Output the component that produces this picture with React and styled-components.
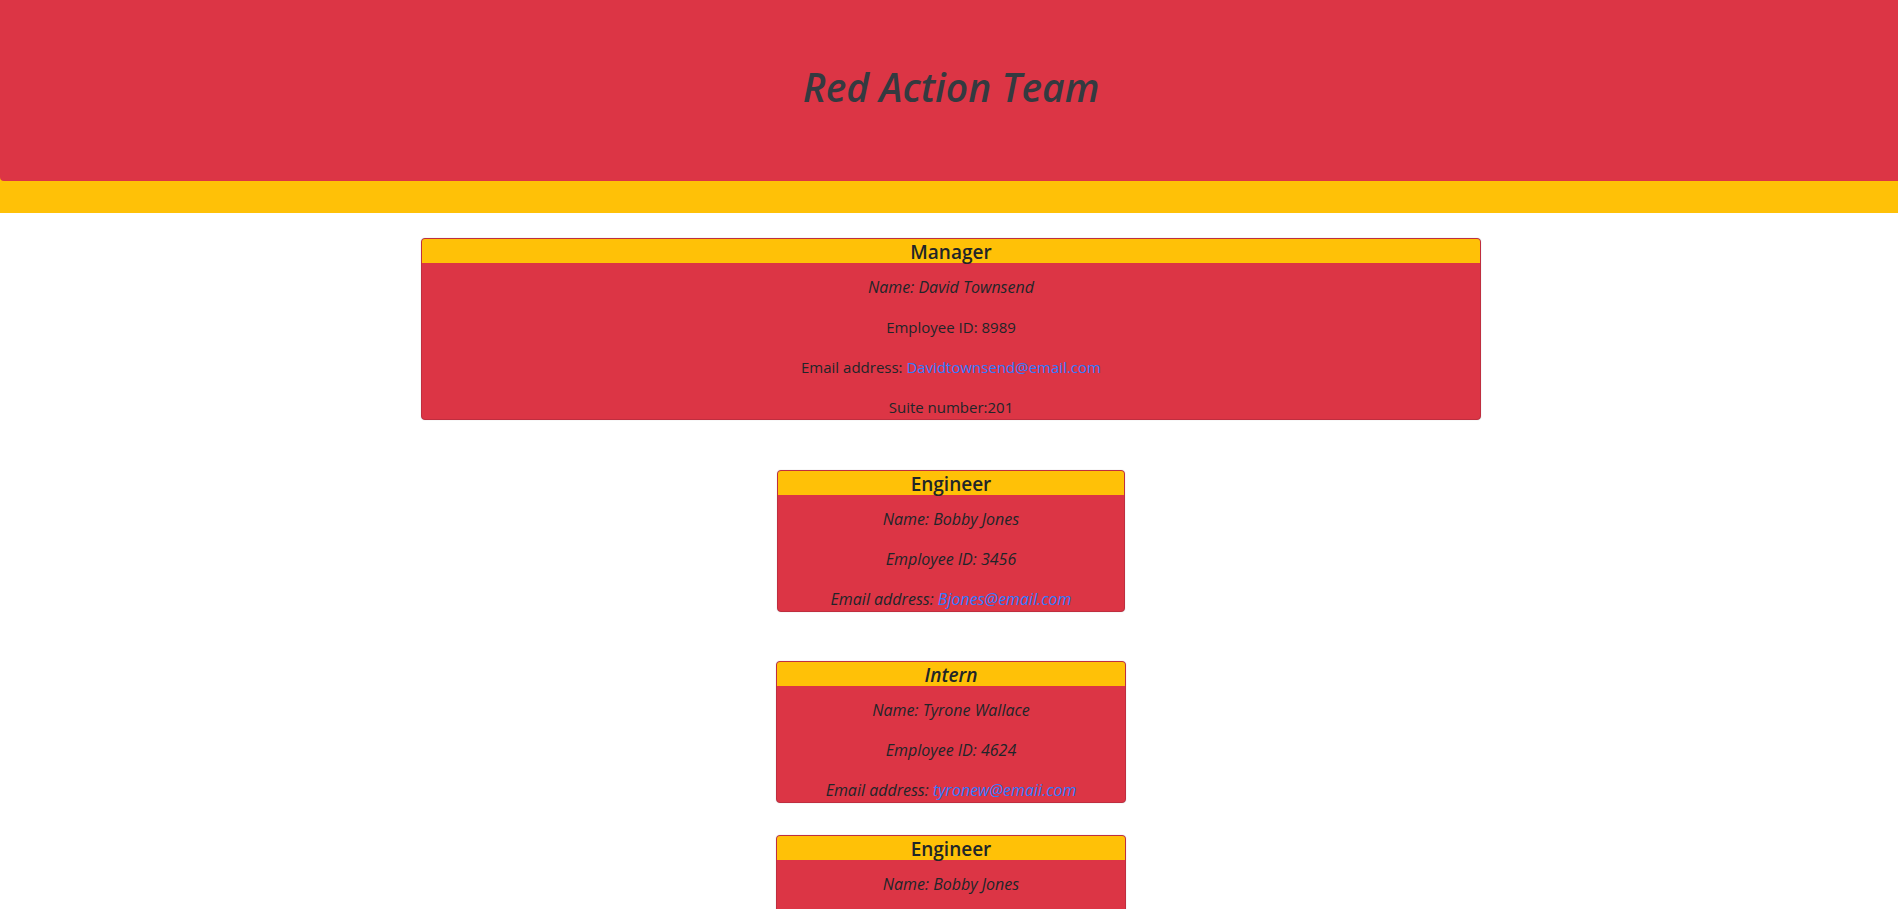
import React from "react";
import styled, { createGlobalStyle } from "styled-components";

const GlobalStyle = createGlobalStyle`
  *, *::before, *::after { box-sizing: border-box; }
  body {
    margin: 0;
    overflow-x: hidden;
    background: #fff;
    color: #212529;
    font-family: "Segoe UI", "Open Sans", "Noto Sans", sans-serif;
    font-size: 15px;
    line-height: 24px;
  }
`;

const Page = styled.div`
  width: calc(100% + 4px);
  text-align: center;
`;

const Banner = styled.header`
  background: #ffc107;
  padding-bottom: 32px;
`;

const Jumbotron = styled.div`
  padding: 63px 32px 70px;
  background: #dc3545;
  border-radius: 0 0 4px 4px;
`;

const Title = styled.h1`
  margin: 0;
  color: #343a40;
  font-size: 39px;
  font-style: italic;
  font-weight: 600;
  line-height: 48px;
`;

const Team = styled.main`
  display: flex;
  flex-direction: column;
  align-items: center;
  padding-top: 25px;
`;

const Card = styled.section`
  width: ${({ $width }) => $width};
  margin-bottom: ${({ $gap }) => $gap}px;
  background: #dc3545;
  border: 1px solid #bf2e3f;
  border-radius: 4px;
  box-shadow: 0 0 1px rgba(0, 0, 0, 0.3);
`;

const Role = styled.h2`
  margin: 0 0 12px;
  padding-top: 2px;
  background: #ffc107;
  border-radius: 3px 3px 0 0;
  font-size: 19px;
  font-style: ${({ $italic }) => ($italic ? "italic" : "normal")};
  font-weight: 600;
  line-height: 22px;
`;

const Details = styled.div`
  display: flex;
  flex-direction: column;
  gap: 16px;
`;

const Detail = styled.p`
  margin: 0;
  font-size: ${({ $italic }) => ($italic ? "16px" : "15px")};
  font-style: ${({ $italic }) => ($italic ? "italic" : "normal")};
`;

const EmailLink = styled.a`
  color: #2f7bff;
  text-decoration: none;
`;

const members = [
  { role: "Manager", name: "David Townsend", id: 8989, email: "Davidtownsend@email.com", suite: 201, width: "1060px", gap: 50 },
  { role: "Engineer", name: "Bobby Jones", id: 3456, email: "Bjones@email.com", width: "348px", gap: 49, italic: true },
  { role: "Intern", name: "Tyrone Wallace", id: 4624, email: "tyronew@emaii.com", width: "350px", gap: 32, italic: true, italicRole: true },
  { role: "Engineer", name: "Bobby Jones", id: 3456, email: "Bjones@email.com", width: "350px", gap: 48, italic: true },
];

function MemberCard({ member }) {
  return (
    <Card $width={member.width} $gap={member.gap}>
      <Role $italic={member.italicRole}>{member.role}</Role>
      <Details>
        <Detail $italic>Name: {member.name}</Detail>
        <Detail $italic={member.italic}>Employee ID: {member.id}</Detail>
        <Detail $italic={member.italic}>
          Email address: <EmailLink href={`mailto:${member.email}`}>{member.email}</EmailLink>
        </Detail>
        {member.suite && <Detail>Suite number:{member.suite}</Detail>}
      </Details>
    </Card>
  );
}

export default function App() {
  return (
    <>
      <GlobalStyle />
      <Page>
        <Banner>
          <Jumbotron>
            <Title>Red Action Team</Title>
          </Jumbotron>
        </Banner>
        <Team>
          {members.map((member, index) => (
            <MemberCard key={index} member={member} />
          ))}
        </Team>
      </Page>
    </>
  );
}
